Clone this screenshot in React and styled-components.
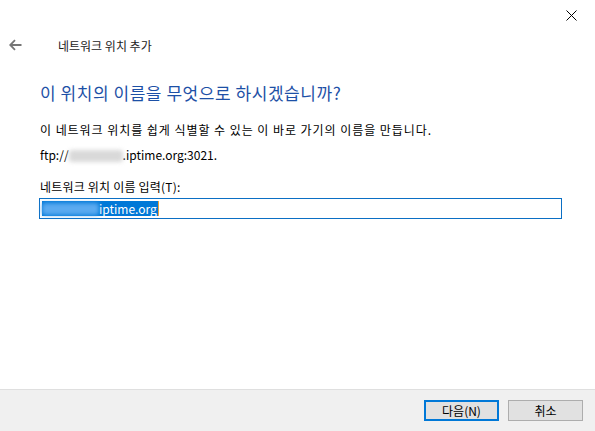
import React from 'react';
import styled, { createGlobalStyle } from 'styled-components';

const GlobalStyle = createGlobalStyle`
  html, body {
    margin: 0;
    padding: 0;
    background: #ffffff;
  }
  body {
    font-family: "Noto Sans CJK KR", "Noto Sans", sans-serif;
    color: #000;
  }
`;

const Window = styled.div`
  width: 595px;
  height: 431px;
  display: flex;
  flex-direction: column;
  background: #fff;
  overflow: hidden;
`;

const TitleBar = styled.div`
  height: 30px;
  display: flex;
  justify-content: flex-end;
`;

const CloseButton = styled.div`
  width: 46px;
  height: 30px;
  display: flex;
  align-items: center;
  justify-content: center;
  margin-right: 1px;
`;

const NavRow = styled.div`
  height: 30px;
  display: flex;
  align-items: center;
  padding-left: 9px;
  gap: 36px;
`;

const BackArrow = styled.div`
  width: 13px;
  height: 12px;
  display: flex;
`;

const NavTitle = styled.span`
  font-size: 12px;
  color: #1b1b1b;
`;

const Content = styled.div`
  flex: 1;
  display: flex;
  flex-direction: column;
  padding: 0 33px 0 39px;
`;

const Heading = styled.h1`
  margin: 20px 0 0 1px;
  font-size: 17px;
  font-weight: 400;
  color: #1d50a6;
  line-height: 26px;
  letter-spacing: 0.55px;
`;

const Para = styled.p`
  margin: ${({ $top }) => $top}px 0 0 1px;
  font-size: 12px;
  line-height: 16px;
  letter-spacing: ${({ $spacing }) => $spacing || 0}px;
`;

const Blur = styled.span`
  display: inline-block;
  width: ${({ $w }) => $w}px;
  height: 12px;
  vertical-align: -2px;
  background: ${({ $color }) => $color};
  filter: blur(2px);
  border-radius: 3px;
`;

const Label = styled.div`
  margin: 16px 0 0 1px;
  font-size: 12px;
  line-height: 16px;
  letter-spacing: 0.2px;
`;

const Input = styled.div`
  margin-top: 3px;
  height: 19px;
  border: 1px solid #0b6fc4;
  display: flex;
  align-items: center;
  padding-left: 2px;
`;

const Selection = styled.span`
  display: inline-flex;
  align-items: center;
  height: 15px;
  background: #0078d7;
  color: #fff;
  font-size: 12px;
  line-height: 15px;
  padding-right: 1px;
  border-right: 1px solid #e8a33a;
`;

const Footer = styled.div`
  height: 41px;
  background: #f0f0f0;
  border-top: 1px solid #dfdfdf;
  display: flex;
  justify-content: flex-end;
  align-items: center;
  gap: 9px;
  padding-right: 12px;
`;

const Button = styled.button`
  width: 75px;
  height: 21px;
  background: #e1e1e1;
  border: ${({ $default }) => ($default ? '2px solid #0078d7' : '1px solid #adadad')};
  font-family: "Noto Sans CJK KR", "Noto Sans", sans-serif;
  font-size: 12px;
  color: #000;
  padding: 0;
  display: flex;
  align-items: center;
  justify-content: center;
`;

export default function App() {
  return (
    <>
      <GlobalStyle />
      <Window>
        <TitleBar>
          <CloseButton>
            <svg width="11" height="11" viewBox="0 0 11 11">
              <path d="M0.5 0.5 L10.5 10.5 M10.5 0.5 L0.5 10.5" stroke="#000" strokeWidth="1" />
            </svg>
          </CloseButton>
        </TitleBar>
        <NavRow>
          <BackArrow>
            <svg width="13" height="12" viewBox="0 0 13 12">
              <path d="M1.2 6 H12.5 M6 1.2 L1.2 6 L6 10.8" stroke="#767676" strokeWidth="1.8" fill="none" />
            </svg>
          </BackArrow>
          <NavTitle>네트워크 위치 추가</NavTitle>
        </NavRow>
        <Content>
          <Heading>이 위치의 이름을 무엇으로 하시겠습니까?</Heading>
          <Para $top={16} $spacing={0.95}>이 네트워크 위치를 쉽게 식별할 수 있는 이 바로 가기의 이름을 만듭니다.</Para>
          <Para $top={9}>
            ftp://<Blur $w={54} $color="#d9d9d9" />.iptime.org:3021.
          </Para>
          <Label>네트워크 위치 이름 입력(T):</Label>
          <Input>
            <Selection>
              <Blur $w={57} $color="#5aaaf0" />
              iptime.org
            </Selection>
          </Input>
        </Content>
        <Footer>
          <Button $default>다음(N)</Button>
          <Button>취소</Button>
        </Footer>
      </Window>
    </>
  );
}
